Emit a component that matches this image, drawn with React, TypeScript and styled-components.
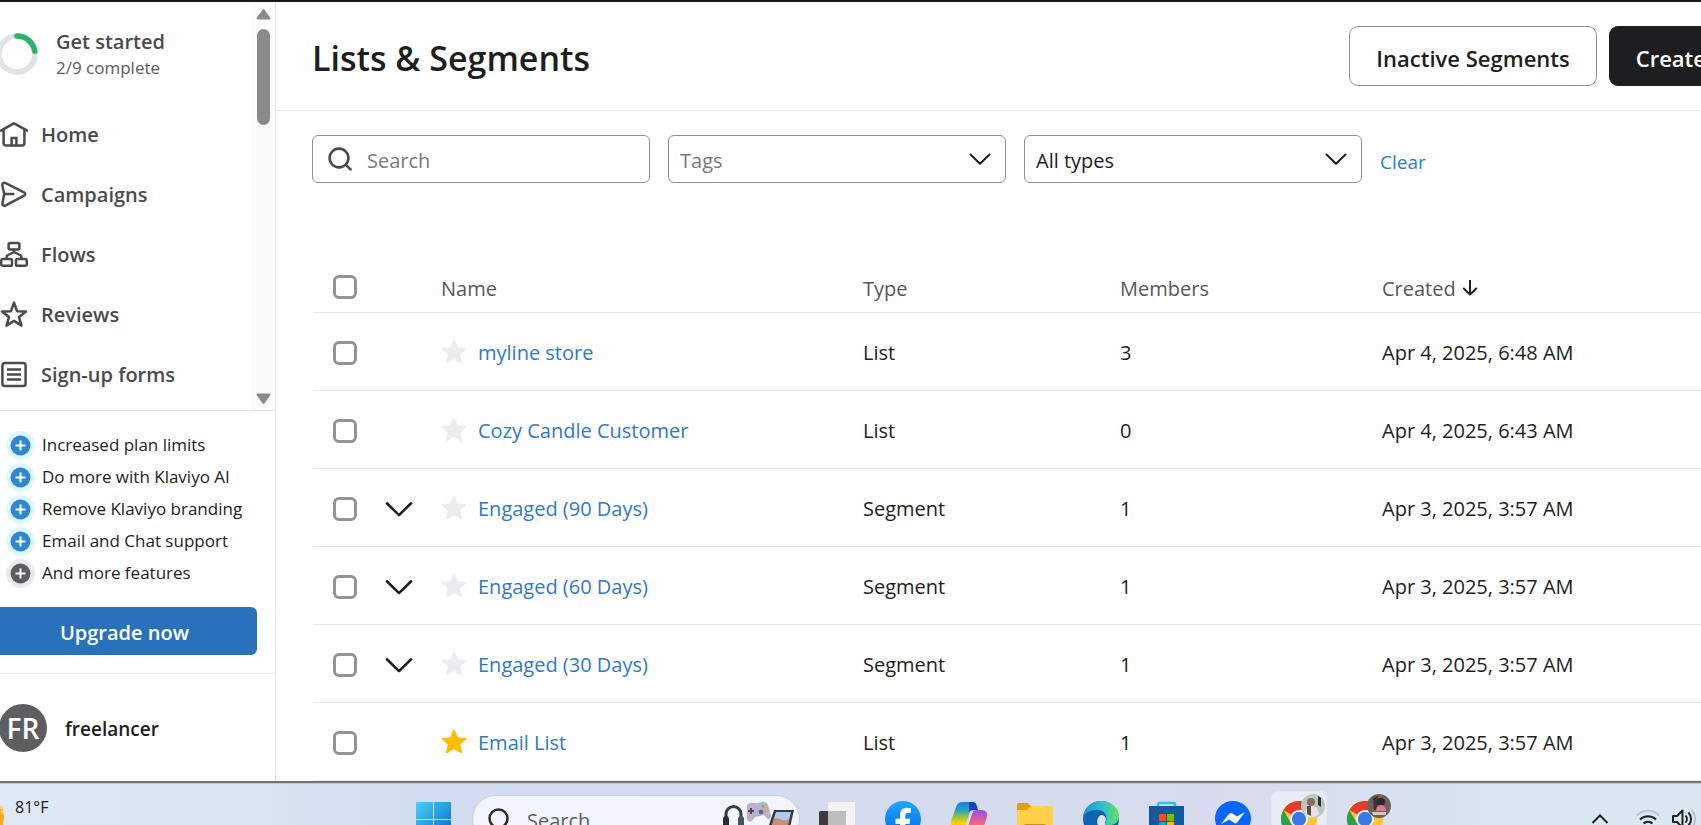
import React from "react";
import styled, { createGlobalStyle, css } from "styled-components";

const GlobalStyle = createGlobalStyle`
  *, *::before, *::after { box-sizing: border-box; }
  body {
    margin: 0;
    background: #fff;
    color: #1d1e20;
    font-family: "Open Sans", "Noto Sans", sans-serif;
    font-size: 20px;
    line-height: 28px;
  }
  button, input, select { font: inherit; color: inherit; }
  svg { display: block; flex: none; }
`;

const Screen = styled.div`
  display: flex;
  flex-direction: column;
  height: 100vh;
  overflow: hidden;
  border-top: 2px solid #1b1718;
`;

const Workspace = styled.div`
  display: flex;
  flex: 1;
  min-height: 0;
`;

/* Sidebar */

const Sidebar = styled.aside`
  display: flex;
  flex-direction: column;
  flex: 0 0 276px;
  overflow: hidden;
  border-right: 1px solid #e6e8ea;
`;

const SidebarScroller = styled.div`
  display: flex;
  flex: 1;
  min-height: 0;
`;

const SidebarContent = styled.div`
  flex: 1;
  min-width: 0;
  padding-top: 26px;
`;

const ScrollTrack = styled.div`
  display: flex;
  flex-direction: column;
  align-items: center;
  width: 23px;
  padding: 6px 0 5px;
  background: #fbfbfb;
`;

const ScrollThumb = styled.div`
  width: 13px;
  height: 96px;
  margin: 9px 0 auto;
  border-radius: 7px;
  background: #8a8a8a;
`;

const GetStarted = styled.a`
  display: flex;
  align-items: center;
  gap: 18px;
  height: 52px;
  margin: 0 0 25px -4px;
  color: #4a4b4d;
  text-decoration: none;
`;

const GetStartedText = styled.span`
  display: flex;
  flex-direction: column;
`;

const GetStartedTitle = styled.strong`
  font-weight: 600;
  line-height: 28px;
`;

const GetStartedProgress = styled.span`
  color: #5a5b5d;
  font-size: 17px;
  line-height: 24px;
`;

const NavItem = styled.a`
  display: flex;
  align-items: center;
  gap: 13px;
  height: 60px;
  color: #4a4b4d;
  font-weight: 600;
  text-decoration: none;
`;

const Upsell = styled.section`
  padding: 18px 18px 18px 0;
  border-top: 1px solid #e3e5e8;
`;

const FeatureList = styled.ul`
  margin: 0 0 18px;
  padding: 0 0 0 6px;
  list-style: none;
`;

const Feature = styled.li`
  display: flex;
  align-items: center;
  gap: 7px;
  height: 32px;
  font-size: 17px;
  line-height: 24px;
  white-space: nowrap;
`;

const UpgradeButton = styled.button`
  display: block;
  width: calc(100% + 8px);
  height: 48px;
  margin-left: -8px;
  padding: 3px 0 0;
  border: 0;
  border-radius: 6px;
  background: #2a71bc;
  color: #fff;
  font-weight: 600;
`;

const Account = styled.section`
  display: flex;
  align-items: center;
  gap: 18px;
  height: 108px;
  border-top: 1px solid #e9e9ea;
`;

const AccountName = styled.span`
  padding-top: 3px;
  font-size: 19px;
  font-weight: 600;
`;

const Avatar = styled.span`
  display: grid;
  place-items: center;
  width: 48px;
  height: 48px;
  margin-left: -1px;
  border-radius: 50%;
  background: #5d5e5f;
  color: #fff;
  font-size: 28px;
  font-weight: 600;
`;

/* Main area */

const Main = styled.main`
  flex: 1;
  min-width: 0;
  overflow: hidden;
`;

const PageHeader = styled.header`
  display: flex;
  align-items: center;
  justify-content: space-between;
  height: 109px;
  padding: 0 0 0 36px;
  border-bottom: 1px solid #e9e9ea;
`;

const Title = styled.h1`
  margin: 0;
  padding-top: 3px;
  font-size: 34px;
  font-weight: 600;
  line-height: 44px;
`;

const Actions = styled.div`
  display: flex;
  gap: 12px;
  margin-right: -32px;
`;

const ActionButton = styled.button<{ $primary?: boolean }>`
  height: 60px;
  padding: 3px 26px 0;
  border: 1px solid #919293;
  border-radius: 9px;
  background: #fff;
  font-size: 22px;
  font-weight: 600;
  white-space: nowrap;
  ${(p) => p.$primary && css`
    border-color: #1d1e20;
    background: #1d1e20;
    color: #fff;
  `}
`;

const Filters = styled.form`
  display: flex;
  align-items: center;
  gap: 18px;
  padding: 24px 36px 0;
`;

const field = css`
  display: flex;
  align-items: center;
  flex: 0 1 338px;
  height: 48px;
  border: 1px solid #8f9091;
  border-radius: 6px;
`;

const SearchField = styled.label`
  ${field}
  gap: 15px;
  padding-left: 15px;
`;

const SearchInput = styled.input`
  flex: 1;
  min-width: 0;
  padding: 3px 0 0;
  border: 0;
  outline: 0;
  background: none;
  &::placeholder { color: #77787a; opacity: 1; }
`;

const SelectField = styled.label`
  ${field}
  display: grid;
  grid-template: 46px / 1fr;
  > * { grid-area: 1 / 1; }
  > svg { justify-self: end; margin-right: 14px; pointer-events: none; }
`;

const Select = styled.select<{ $muted?: boolean }>`
  width: 100%;
  height: 46px;
  padding: 3px 48px 0 11px;
  border: 0;
  border-radius: 6px;
  outline: 0;
  background: none;
  appearance: none;
  color: ${(p) => (p.$muted ? "#77787a" : "#1d1e20")};
`;

const ClearButton = styled.button`
  padding: 6px 0 0;
  border: 0;
  background: none;
  color: #3079c4;
  font-size: 19px;
`;

const Table = styled.table`
  width: calc(100% - 37px);
  margin: 79px 0 0 37px;
  border-collapse: collapse;
  table-layout: fixed;
`;

const Col = styled.col<{ $width?: number }>`
  width: ${(p) => (p.$width ? `${p.$width}px` : "auto")};
`;

const HeadCell = styled.th`
  height: 50px;
  padding: 4px 0 0;
  border-bottom: 1px solid #e6e9eb;
  color: #57585a;
  font-weight: 400;
  text-align: left;
  &:first-child { padding: 0; }
`;

const Cell = styled.td`
  height: 78px;
  padding: 4px 0 0;
  border-bottom: 1px solid #e6e9eb;
  white-space: nowrap;
`;

const Check = styled.input`
  display: block;
  width: 24px;
  height: 24px;
  margin: 0 0 0 20px;
  border: 3px solid #929394;
  border-radius: 6px;
  background: #fff;
  appearance: none;
  &:checked { background: #2a71bc; }
`;

const IconButton = styled.button`
  display: block;
  padding: 0;
  border: 0;
  background: none;
`;

const ExpandButton = styled(IconButton)`
  margin-left: 12px;
`;

const NameGroup = styled.div`
  display: flex;
  align-items: flex-start;
  gap: 11px;
`;

const NameLink = styled.a`
  color: #3079c4;
  text-decoration: none;
`;

const SortButton = styled(IconButton)`
  display: flex;
  align-items: center;
  gap: 5px;
`;

/* Taskbar */

const Taskbar = styled.footer`
  display: flex;
  flex: none;
  align-items: flex-start;
  height: 44px;
  overflow: hidden;
  border-top: 2px solid #707476;
  background: linear-gradient(90deg, #dee9f4 0%, #dbe6f3 14%, #d2dcf0 25%, #d4dbef 50%, #d8dced 75%, #dae8f1 92%, #d9e8f1 100%);
  box-shadow: inset 0 1px #c0c7d0;
  color: #202124;
`;

const TaskbarRow = styled.div`
  display: flex;
  align-items: center;
  width: 100%;
  height: 72px;
`;

const Weather = styled.div`
  display: flex;
  align-items: center;
  gap: 11px;
  flex: 0 0 416px;
  font-size: 16px;
  line-height: 24px;
`;

const TaskSearch = styled.label`
  display: flex;
  align-items: center;
  width: 328px;
  height: 48px;
  margin: 0 19px 0 21px;
  padding: 0 5px 0 15px;
  gap: 16px;
  border: 1px solid #c3cde2;
  border-radius: 24px;
  background: #f2f5fc;
`;

const TaskSearchInput = styled(SearchInput)`
  &::placeholder { color: #5b5c60; }
`;

const TaskApps = styled.div`
  display: flex;
  align-items: center;
  gap: 10px;
  margin-left: -10px;
`;

const TaskButton = styled.button<{ $active?: boolean }>`
  position: relative;
  display: grid;
  place-items: center;
  width: 56px;
  height: 56px;
  padding: 0;
  border: 1px solid ${(p) => (p.$active ? "#e3e7f3" : "transparent")};
  border-radius: 6px;
  background: ${(p) => (p.$active ? "#e9ecf6" : "none")};
`;

const ProfileBadge = styled.span`
  position: absolute;
  top: 2px;
  right: 1px;
`;

const Tray = styled.div`
  display: flex;
  align-items: center;
  gap: 27px;
  margin-left: auto;
  padding-right: 5px;
`;

const TrayStatus = styled.div`
  display: flex;
  align-items: center;
  gap: 11px;
`;

/* Icons */

function NavIcon({ children }: { children: React.ReactNode }) {
  return (
    <svg width="28" height="28" viewBox="0 0 28 28" fill="none" stroke="#4a4b4d" strokeWidth="2.5" strokeLinejoin="round" strokeLinecap="round" aria-hidden="true">
      {children}
    </svg>
  );
}

const navItems = [
  {
    label: "Home",
    icon: <><path d="M.8 9.6 14 2.3l13.2 7.3" /><path d="M3.6 8.6v13.6a2.2 2.2 0 0 0 2.2 2.2h16.4a2.2 2.2 0 0 0 2.2-2.2V8.6" /><path d="M11.6 24V17h4.8v7" strokeLinejoin="miter" /></>,
  },
  {
    label: "Campaigns",
    icon: <><path d="M5.6 2.1 24 11.3c1.7.9 1.7 2.4 0 3.3L5.8 24.4c-2 1-3.7 0-3.3-2.1l1.7-9.3L2.4 4.4c-.4-2.1 1.3-3.2 3.2-2.3Z" /><path d="M4.5 13h8.8" /></>,
  },
  {
    label: "Flows",
    icon: <><rect x="8.6" y="2" width="10.8" height="6.4" rx="1.6" /><rect x="1.2" y="18" width="10.8" height="6.8" rx="1.6" /><rect x="16" y="18" width="10.8" height="6.8" rx="1.6" /><path d="M14 8.6V11M6.6 17.8V16c0-1 .6-1.5 1.4-2L14 11l6 3c.8.5 1.4 1 1.4 2v1.8" /></>,
  },
  {
    label: "Reviews",
    icon: <path d="m14 1.6 3 8.6 9 .2-7 5.6 2.5 8.6-7.5-4.700-7.500 4.700L9 16l-7-5.600 9-.2Z" />,
  },
  {
    label: "Sign-up forms",
    icon: <><rect x="2.4" y="2" width="23.2" height="23" rx="2.6" /><path d="M8.2 8.4h11.6M8.2 13.5h11.6M8.2 18.6h11.6" strokeLinecap="square" /></>,
  },
];

function ScrollArrow({ down }: { down?: boolean }) {
  return (
    <svg width="15" height="12" viewBox="0 0 15 12" aria-hidden="true">
      <path d={down ? "M1.5 1.6h12L7.5 10Z" : "M1.5 10.4h12L7.5 2Z"} fill="#8a8a8a" stroke="#8a8a8a" strokeWidth="2" strokeLinejoin="round" />
    </svg>
  );
}

function ProgressRing() {
  return (
    <svg width="42" height="42" viewBox="0 0 42 42" fill="none" strokeWidth="5.5" aria-hidden="true">
      <circle cx="21" cy="21" r="18" stroke="#dfe3e6" />
      <path d="M21 3a18 18 0 0 1 17.8 15.2" stroke="#2cb16b" strokeLinecap="round" />
    </svg>
  );
}

function PlusIcon({ muted }: { muted?: boolean }) {
  return (
    <svg width="29" height="29" viewBox="0 0 29 29" aria-hidden="true">
      <circle cx="14.5" cy="14.5" r="14.5" fill={muted ? "#e8eaed" : "#e0f6ff"} />
      <circle cx="14.5" cy="14.5" r="10" fill={muted ? "#5d5e5f" : "#2f86d2"} />
      <path d="M14.5 9.5v10M9.5 14.5h10" stroke="#fff" strokeWidth="2" />
    </svg>
  );
}

function SearchIcon({ size = 24, color = "#4a4b4d" }: { size?: number; color?: string }) {
  return (
    <svg width={size} height={size} viewBox="0 0 24 24" fill="none" stroke={color} strokeWidth="2.6" aria-hidden="true">
      <circle cx="11" cy="11" r="9.4" />
      <path d="m17.6 17.6 5.6 5.4" />
    </svg>
  );
}

function Chevron({ width = 22 }: { width?: number }) {
  return (
    <svg width={width} height={width} viewBox="0 0 22 22" fill="none" stroke="#1d1e20" strokeWidth="2" strokeLinecap="round" strokeLinejoin="round" aria-hidden="true">
      <path d="m1.5 6.5 9.5 9.3 9.5-9.3" />
    </svg>
  );
}

function StarIcon({ active }: { active?: boolean }) {
  return (
    <svg width="26" height="26" viewBox="0 0 26 26" aria-hidden="true">
      <path d="M13 .8l3.600 8 8.700.8-6.600 5.900 2 8.600L13 19.600l-7.700 4.500 2-8.600L.7 9.600l8.700-.8Z" fill={active ? "#fdbc00" : "#e9eded"} stroke={active ? "#fdbc00" : "#e9eded"} strokeLinejoin="round" />
    </svg>
  );
}

function ArrowDown() {
  return (
    <svg width="18" height="18" viewBox="0 0 18 18" fill="none" stroke="#1d1e20" strokeWidth="2" strokeLinecap="round" strokeLinejoin="round" aria-hidden="true">
      <path d="M9 0v14.500M2.800 8.500 9 14.600l6.200-6.100" />
    </svg>
  );
}

function ChromeIcon() {
  return (
    <svg width="36" height="36" viewBox="0 0 36 36" aria-hidden="true">
      <circle cx="18" cy="18" r="18" fill="#fcc52c" />
      <path d="M18 18 2.400 9A18 18 0 0 1 33.600 9H18Z" fill="#e33b2e" />
      <path d="M2.400 9A18 18 0 0 0 18 36l7.800-13.500L18 18l-7.800 4.500Z" fill="#2c9f4b" />
      <circle cx="18" cy="18" r="9" fill="#fff" />
      <circle cx="18" cy="18" r="7.200" fill="#3b78e7" />
    </svg>
  );
}

function SunIcon() {
  return (
    <svg width="4" height="36" viewBox="0 0 4 36" aria-hidden="true">
      <path d="M0 5 3 8v3l1 3-1 10-3 4Z" fill="#f2ab26" />
      <path d="M0 5h3v3H0ZM1 9h3v3H1Z" fill="#fbd864" />
    </svg>
  );
}

function SearchHighlight() {
  return (
    <svg width="72" height="46" viewBox="0 0 72 46" aria-hidden="true">
      <path d="M4 30V18a7.500 7.500 0 0 1 15 0v12" fill="none" stroke="#343b4d" strokeWidth="3" />
      <rect x="1" y="20" width="6" height="14" rx="3" fill="#272c3b" />
      <rect x="16" y="20" width="6" height="14" rx="3" fill="#485064" />
      <path d="M25 9c4-4 8-1 11-2s8-3 10 2l3 11c-1 5-4 3-7-1l-9 2c-2 4-6 7-8 2Z" fill="#b9b0c9" />
      <path d="M29 12v6M26 15h6" stroke="#4a4460" strokeWidth="2" />
      <circle cx="41" cy="10" r="1.500" fill="#5ebd66" />
      <circle cx="44" cy="13" r="1.500" fill="#e4b23b" />
      <circle cx="39" cy="16" r="2.400" fill="#6c6486" />
      <path d="M52 14h20l-5 22-22-1Z" fill="#3a3a44" />
      <path d="M54 16h15l-4 17-16-1Z" fill="#a9cdee" />
      <path d="M52 23c5-3 7 4 15 0l-2 10-16-1Z" fill="#c68f6d" />
    </svg>
  );
}

const appIcons: { name: string; icon: React.ReactNode }[] = [
  {
    name: "Task view",
    icon: (
      <svg width="36" height="36" viewBox="0 0 36 36">
        <rect x="9" y="1" width="27" height="27" rx="1.500" fill="#f3f3f3" />
        <rect x="0" y="10" width="27" height="26" rx="1.500" fill="#3c3c3c" />
        <path d="M9 10h18v18H9Z" fill="#bdbdbd" />
      </svg>
    ),
  },
  {
    name: "Facebook",
    icon: (
      <svg width="36" height="36" viewBox="0 0 36 36">
        <defs><linearGradient id="fb" x2="0" y2="1"><stop stopColor="#1aa9fb" /><stop offset="1" stopColor="#0668e1" /></linearGradient></defs>
        <circle cx="18" cy="18" r="18" fill="url(#fb)" />
        <path d="M15 36V23h-4.500v-5.200H15v-3.600c0-5 2.800-7.400 7-7.400 1.500 0 2.900.2 3.800.4v4.500h-2.600c-2.200 0-2.900 1.200-2.900 2.900v3.200h5l-.8 5.200h-4.200v13Z" fill="#fff" />
      </svg>
    ),
  },
  {
    name: "Copilot",
    icon: (
      <svg width="36" height="36" viewBox="0 0 36 36">
        <defs>
          <linearGradient id="cpa" x2="0" y2="1"><stop stopColor="#1a80e4" /><stop offset=".3" stopColor="#21a1c8" /><stop offset=".55" stopColor="#8bc34a" /><stop offset=".8" stopColor="#ffd000" /></linearGradient>
          <linearGradient id="cpb" x2="0" y2="1"><stop stopColor="#9a4be8" /><stop offset=".5" stopColor="#f2647f" /><stop offset="1" stopColor="#f88b4a" /></linearGradient>
        </defs>
        <path d="M11 1h11l-7 22c-1 3-2 4-5 4H5c-4 0-6-3-5-7L5 6c1-3 3-5 6-5Z" fill="url(#cpa)" />
        <path d="M18 1h4c3 0 4 3 5 8-5 0-6 0-9 2Z" fill="#1740c5" />
        <path d="M25 35H14l7-22c1-3 2-4 5-4h5c4 0 6 3 5 7l-5 14c-1 3-3 5-6 5Z" fill="url(#cpb)" />
      </svg>
    ),
  },
  {
    name: "File Explorer",
    icon: (
      <svg width="36" height="36" viewBox="0 0 36 36">
        <path d="M0 4a2 2 0 0 1 2-2h9l4 4h19a2 2 0 0 1 2 2v8H0Z" fill="#dfa00c" />
        <path d="M0 9h10l4-4h20a2 2 0 0 1 2 2v24a2 2 0 0 1-2 2H2a2 2 0 0 1-2-2Z" fill="#ffd04a" />
        <path d="M7 33v-8a2 2 0 0 1 2-2h18a2 2 0 0 1 2 2v8Z" fill="#c99118" />
      </svg>
    ),
  },
  {
    name: "Edge",
    icon: (
      <svg width="36" height="36" viewBox="0 0 36 36">
        <defs><linearGradient id="ed"><stop stopColor="#1d90d2" /><stop offset=".55" stopColor="#2fc1d0" /><stop offset="1" stopColor="#62e356" /></linearGradient></defs>
        <circle cx="18" cy="18" r="18" fill="#0e65b4" />
        <path d="M0 16C1 6 9 0 18 0c10 0 18 7 18 15 0 7-6 10-12 9-3-.6-2-2-1-4 2-6-2-11-9-11C7 9 2 12 0 16Z" fill="url(#ed)" />
        <path d="M17 27c-4-4-4-10 1-13 4 0 6 4 4 7-1 3 3 5 7 4l-5 5Z" fill="#dbe4f1" />
      </svg>
    ),
  },
  {
    name: "Microsoft Store",
    icon: (
      <svg width="36" height="36" viewBox="0 0 36 36">
        <path d="M9 7V3.500A1.500 1.500 0 0 1 10.500 2h14A1.500 1.500 0 0 1 26 3.500V7" fill="none" stroke="#2cc1f5" strokeWidth="2.400" />
        <path d="M0 5h35v26a3 3 0 0 1-3 3H3a3 3 0 0 1-3-3Z" fill="#14589d" />
        <path d="M10 13h7v7h-7Z" fill="#f25022" /><path d="M18 13h7v7h-7Z" fill="#7fba00" />
        <path d="M10 21h7v7h-7Z" fill="#00a4ef" /><path d="M18 21h7v7h-7Z" fill="#ffb900" />
      </svg>
    ),
  },
  {
    name: "Messenger",
    icon: (
      <svg width="36" height="36" viewBox="0 0 36 36">
        <path d="M18 0C8 0 0 7.500 0 17.300c0 5.200 2.200 9.700 5.800 12.700V36l5.500-3c2 .6 4.300.9 6.700.9 10 0 18-7.200 18-16.600S28 0 18 0Z" fill="#0866ff" />
        <path d="m6 23 8-10c1.200-1.300 2.400-1.400 3.600-.5l4.300 3.100L30 11l-7.600 10.300c-1.200 1.400-2.400 1.400-3.600.5l-4.500-3.200Z" fill="#fff" />
      </svg>
    ),
  },
];

function ProfilePhoto({ light }: { light?: boolean }) {
  return (
    <svg width="24" height="24" viewBox="0 0 24 24" aria-hidden="true">
      <circle cx="12" cy="12" r="12" fill={light ? "#b9c7bd" : "#6d6159"} />
      <path d={light ? "M17 2l3 2v9l-3-2Z" : "M6 4l5-2v14H7Z"} fill={light ? "#25342c" : "#3d3431"} />
      <circle cx={light ? 10 : 14} cy="8" r="4" fill={light ? "#8c6a5a" : "#33262a"} />
      <path d={light ? "M4 21c0-6 3-9 7-9s7 4 7 8c-4 4-10 5-14 1Z" : "M9 17c0-4 2-6 5-6s5 2 5 6Z"} fill={light ? "#e2e4e6" : "#d77b94"} />
      <path d={light ? "M6 12h4v10l-4-2Z" : "M5 18h14v3H6Z"} fill={light ? "#574c48" : "#d9cbbb"} />
    </svg>
  );
}

const features = ["Increased plan limits", "Do more with Klaviyo AI", "Remove Klaviyo branding", "Email and Chat support", "And more features"];

const rows = [
  { name: "myline store", type: "List", members: 3, created: "Apr 4, 2025, 6:48 AM" },
  { name: "Cozy Candle Customer", type: "List", members: 0, created: "Apr 4, 2025, 6:43 AM" },
  { name: "Engaged (90 Days)", type: "Segment", members: 1, created: "Apr 3, 2025, 3:57 AM" },
  { name: "Engaged (60 Days)", type: "Segment", members: 1, created: "Apr 3, 2025, 3:57 AM" },
  { name: "Engaged (30 Days)", type: "Segment", members: 1, created: "Apr 3, 2025, 3:57 AM" },
  { name: "Email List", type: "List", members: 1, created: "Apr 3, 2025, 3:57 AM", starred: true },
];

export default function App() {
  return (
    <Screen>
      <GlobalStyle />
      <Workspace>
        <Sidebar>
          <SidebarScroller>
            <SidebarContent>
              <GetStarted href="#get-started">
                <ProgressRing />
                <GetStartedText>
                  <GetStartedTitle>Get started</GetStartedTitle>
                  <GetStartedProgress>2/9 complete</GetStartedProgress>
                </GetStartedText>
              </GetStarted>
              <nav>
                {navItems.map((item) => (
                  <NavItem key={item.label} href="#nav">
                    <NavIcon>{item.icon}</NavIcon>
                    {item.label}
                  </NavItem>
                ))}
              </nav>
            </SidebarContent>
            <ScrollTrack>
              <ScrollArrow />
              <ScrollThumb />
              <ScrollArrow down />
            </ScrollTrack>
          </SidebarScroller>
          <Upsell>
            <FeatureList>
              {features.map((text, i) => (
                <Feature key={text}>
                  <PlusIcon muted={i === features.length - 1} />
                  {text}
                </Feature>
              ))}
            </FeatureList>
            <UpgradeButton>Upgrade now</UpgradeButton>
          </Upsell>
          <Account>
            <Avatar>FR</Avatar>
            <AccountName>freelancer</AccountName>
          </Account>
        </Sidebar>

        <Main>
          <PageHeader>
            <Title>Lists &amp; Segments</Title>
            <Actions>
              <ActionButton>Inactive Segments</ActionButton>
              <ActionButton $primary>Create</ActionButton>
            </Actions>
          </PageHeader>

          <Filters onSubmit={(e) => e.preventDefault()}>
            <SearchField>
              <SearchIcon />
              <SearchInput placeholder="Search" aria-label="Search lists and segments" />
            </SearchField>
            <SelectField>
              <Select $muted aria-label="Tags"><option>Tags</option></Select>
              <Chevron />
            </SelectField>
            <SelectField>
              <Select aria-label="Type"><option>All types</option></Select>
              <Chevron />
            </SelectField>
            <ClearButton type="reset">Clear</ClearButton>
          </Filters>

          <Table>
            <colgroup>
              <Col $width={60} />
              <Col $width={68} />
              <Col $width={422} />
              <Col $width={257} />
              <Col $width={262} />
              <Col />
            </colgroup>
            <thead>
              <tr>
                <HeadCell><Check type="checkbox" aria-label="Select all" /></HeadCell>
                <HeadCell />
                <HeadCell>Name</HeadCell>
                <HeadCell>Type</HeadCell>
                <HeadCell>Members</HeadCell>
                <HeadCell><SortButton>Created <ArrowDown /></SortButton></HeadCell>
              </tr>
            </thead>
            <tbody>
              {rows.map((row) => (
                <tr key={row.name}>
                  <Cell><Check type="checkbox" aria-label={`Select ${row.name}`} /></Cell>
                  <Cell>
                    {row.type === "Segment" && (
                      <ExpandButton aria-label={`Expand ${row.name}`}><Chevron width={28} /></ExpandButton>
                    )}
                  </Cell>
                  <Cell>
                    <NameGroup>
                      <IconButton aria-label={`Star ${row.name}`}><StarIcon active={row.starred} /></IconButton>
                      <NameLink href="#list">{row.name}</NameLink>
                    </NameGroup>
                  </Cell>
                  <Cell>{row.type}</Cell>
                  <Cell>{row.members}</Cell>
                  <Cell>{row.created}</Cell>
                </tr>
              ))}
            </tbody>
          </Table>
        </Main>
      </Workspace>

      <Taskbar>
        <TaskbarRow>
          <Weather>
            <SunIcon />
            <span>81°F<br />Haze</span>
          </Weather>
          <IconButton aria-label="Start">
            <svg width="35" height="35" viewBox="0 0 35 35">
              <defs><linearGradient id="win" x2="1" y2="1"><stop stopColor="#4cd0fb" /><stop offset="1" stopColor="#0167c8" /></linearGradient></defs>
              <path d="M1 0h16v17H0V1a1 1 0 0 1 1-1ZM18 0h16a1 1 0 0 1 1 1v16H18ZM0 18h17v17H1a1 1 0 0 1-1-1ZM18 18h17v16a1 1 0 0 1-1 1H18Z" fill="url(#win)" />
            </svg>
          </IconButton>
          <TaskSearch>
            <SearchIcon size={23} color="#2b2c2e" />
            <TaskSearchInput placeholder="Search" aria-label="Search the computer" />
            <SearchHighlight />
          </TaskSearch>
          <TaskApps>
            {appIcons.map((app) => (
              <TaskButton key={app.name} aria-label={app.name}>{app.icon}</TaskButton>
            ))}
            <TaskButton $active aria-label="Chrome, first profile">
              <ChromeIcon />
              <ProfileBadge><ProfilePhoto light /></ProfileBadge>
            </TaskButton>
            <TaskButton aria-label="Chrome, second profile">
              <ChromeIcon />
              <ProfileBadge><ProfilePhoto /></ProfileBadge>
            </TaskButton>
          </TaskApps>
          <Tray>
            <svg width="18" height="18" viewBox="0 0 18 18" fill="none" stroke="#202124" strokeWidth="2" aria-hidden="true"><path d="m1.500 13 7.500-7.500 7.500 7.500" /></svg>
            <TrayStatus>
              <svg width="24" height="22" viewBox="0 0 24 22" fill="none" stroke="#202124" strokeWidth="2" aria-hidden="true">
                <path d="M1 7.500a15 15 0 0 1 22 0" stroke="#b9c4cd" />
                <path d="M4 11.500a11.300 11.300 0 0 1 16 0M7.500 15.500a6.400 6.400 0 0 1 9 0" /><circle cx="12" cy="19.500" r="1.500" />
              </svg>
              <svg width="25" height="22" viewBox="0 0 25 22" fill="none" stroke="#202124" strokeWidth="2" strokeLinejoin="round" aria-hidden="true">
                <path d="M2 8h4l5.500-5.500v17L6 14H2Z" /><path d="M14.500 7.500a5 5 0 0 1 0 7M17.500 4.500a9.500 9.500 0 0 1 0 13" /><path d="M20.500 2a13 13 0 0 1 0 18" stroke="#b9c4cd" />
              </svg>
            </TrayStatus>
          </Tray>
        </TaskbarRow>
      </Taskbar>
    </Screen>
  );
}
